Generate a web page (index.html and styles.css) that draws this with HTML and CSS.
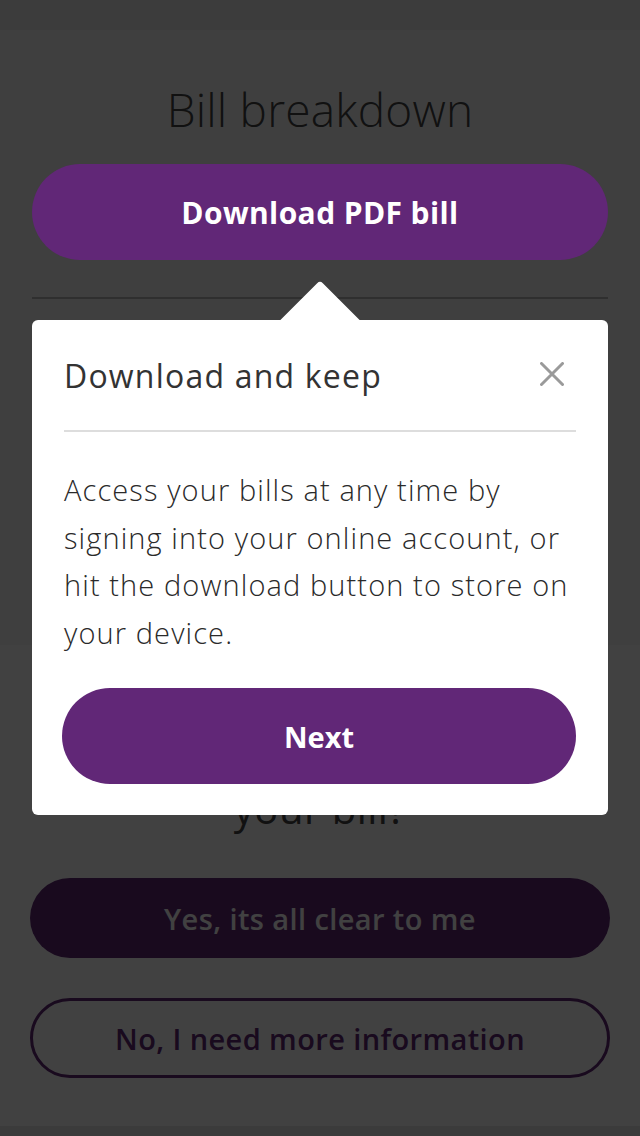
FILE: index.html
```html
<!DOCTYPE html>
<html lang="en">
<head>
<meta charset="utf-8">
<title>Bill breakdown</title>
<link rel="stylesheet" href="styles.css">
</head>
<body>
<div class="screen">
  <div class="statusbar"></div>
  <main class="page">
    <section class="intro">
      <h1 class="title">Bill breakdown</h1>
      <button class="btn btn-primary btn-highlight" type="button">Download PDF bill</button>
      <hr class="divider">
    </section>
    <section class="breakdown" aria-hidden="true"></section>
    <section class="feedback">
      <h2 class="feedback-title">Is everything clear on<br>your bill?</h2>
      <button class="btn btn-primary btn-answer" type="button">Yes, its all clear to me</button>
      <button class="btn btn-outline btn-answer" type="button">No, I need more information</button>
    </section>
  </main>
  <div class="footerbar"></div>

  <div class="overlay"></div>

  <div class="popover" role="dialog" aria-labelledby="pop-title">
    <div class="popover-header">
      <h3 class="popover-title" id="pop-title">Download and keep</h3>
      <button class="close" type="button" aria-label="Close">
        <svg width="24" height="24" viewBox="0 0 24 24" aria-hidden="true">
          <path d="M1.5 1.5 L22.5 22.5 M22.5 1.5 L1.5 22.5" stroke="#9a9a9a" stroke-width="3" stroke-linecap="round" fill="none"/>
        </svg>
      </button>
    </div>
    <p class="popover-text">Access your bills at any time by signing into your online account, or hit the download button to store on your device.</p>
    <button class="btn btn-primary btn-next" type="button">Next</button>
  </div>
</div>
</body>
</html>
```

FILE: styles.css
```css
* { box-sizing: border-box; }

html, body {
  margin: 0;
  padding: 0;
  background: #414141;
}

body {
  font-family: "Open Sans", "Noto Sans", "Liberation Sans", sans-serif;
}

.screen {
  position: relative;
  width: 640px;
  height: 1136px;
  overflow: hidden;
  background: #ffffff;
  display: flex;
  flex-direction: column;
}

.statusbar {
  height: 30px;
  background: #ebebeb;
  flex: none;
}

.page {
  flex: 1;
  display: flex;
  flex-direction: column;
}

.intro {
  background: #f8f8f8;
  padding: 51px 32px 0;
  display: flex;
  flex-direction: column;
}

.title {
  margin: 0;
  font-size: 46px;
  line-height: 56px;
  font-weight: 300;
  letter-spacing: 0.2px;
  text-align: center;
  color: #434343;
}

.btn {
  display: flex;
  align-items: center;
  justify-content: center;
  border: none;
  font-family: inherit;
  font-weight: 700;
  cursor: pointer;
}

.btn-primary {
  background: #612777;
  color: #ffffff;
}

.btn-highlight {
  position: relative;
  z-index: 2;
  margin-top: 27px;
  height: 96px;
  border-radius: 48px;
  font-size: 30px;
  letter-spacing: 0.4px;
}

.divider {
  margin: 37px 0 0;
  border: none;
  height: 2px;
  background: #b8b8b8;
}

.breakdown {
  background: #f8f8f8;
  height: 346px;
}

.feedback {
  flex: 1;
  padding: 92px 30px 0;
  display: flex;
  flex-direction: column;
}

.feedback-title {
  margin: 0;
  font-size: 40px;
  line-height: 48px;
  font-weight: 400;
  letter-spacing: 0.5px;
  text-align: center;
  color: #434343;
}

.btn-answer {
  height: 80px;
  border-radius: 40px;
  font-size: 29px;
  font-weight: 600;
  letter-spacing: 0.4px;
}

.btn-answer.btn-primary {
  margin-top: 45px;
}

.btn-outline {
  margin-top: 40px;
  background: transparent;
  border: 3px solid #612777;
  color: #612777;
}

.footerbar {
  height: 10px;
  background: #e8e8e8;
  flex: none;
}

.overlay {
  position: absolute;
  inset: 0;
  background: rgba(0, 0, 0, 0.745);
  z-index: 1;
}

.popover {
  position: absolute;
  z-index: 3;
  top: 320px;
  left: 32px;
  width: 576px;
  height: 495px;
  background: #ffffff;
  border-radius: 6px;
  padding: 36px 32px 31px;
  display: flex;
  flex-direction: column;
}

.popover::before {
  content: "";
  position: absolute;
  top: -28px;
  left: 260px;
  width: 56px;
  height: 56px;
  background: #ffffff;
  transform: rotate(45deg);
  border-top-left-radius: 4px;
}

.popover-header {
  position: relative;
  display: flex;
  align-items: center;
  justify-content: space-between;
  padding-bottom: 34px;
  border-bottom: 2px solid #dddddd;
}

.popover-title {
  margin: 0;
  font-size: 32px;
  line-height: 40px;
  font-weight: 400;
  letter-spacing: 1.2px;
  color: #333333;
}

.close {
  width: 48px;
  height: 40px;
  margin-top: -4px;
  padding: 0;
  border: none;
  background: transparent;
  display: flex;
  align-items: center;
  justify-content: center;
  cursor: pointer;
}

.popover-text {
  margin: 34px 0 0;
  font-size: 29px;
  line-height: 47.6px;
  font-weight: 300;
  letter-spacing: 1.1px;
  color: #2a2a2a;
}

.btn-next {
  margin-top: auto;
  margin-left: -2px;
  height: 96px;
  border-radius: 48px;
  font-size: 29px;
}
```
